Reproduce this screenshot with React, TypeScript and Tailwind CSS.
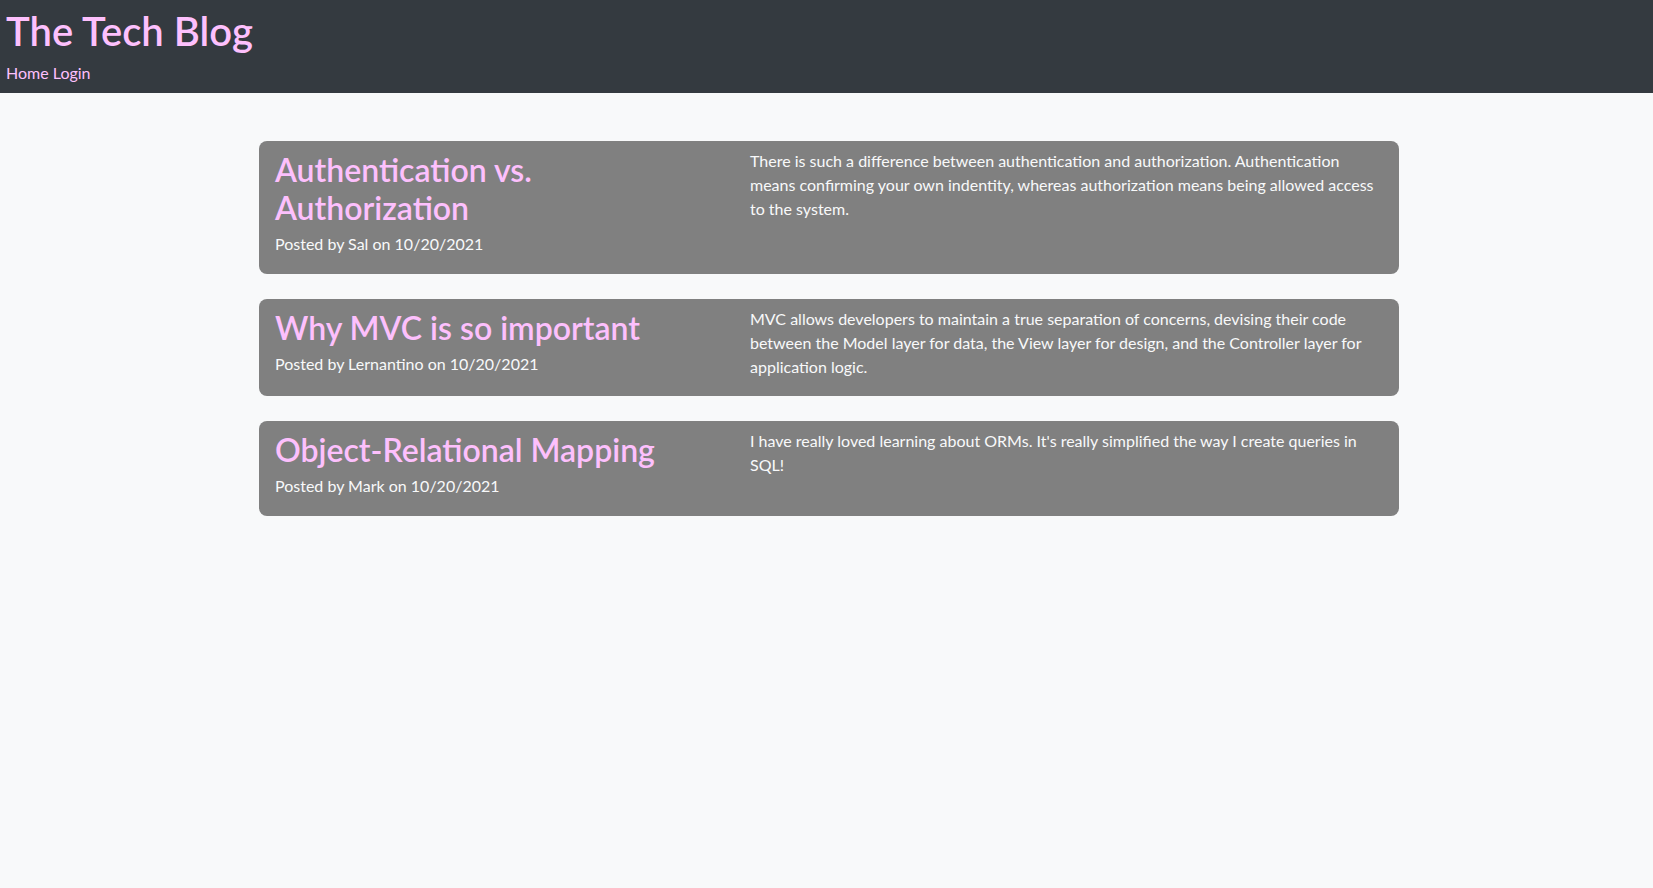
const posts = [
  {
    title: "Authentication vs. Authorization",
    author: "Sal",
    date: "10/20/2021",
    body: "There is such a difference between authentication and authorization. Authentication means confirming your own indentity, whereas authorization means being allowed access to the system.",
  },
  {
    title: "Why MVC is so important",
    author: "Lernantino",
    date: "10/20/2021",
    body: "MVC allows developers to maintain a true separation of concerns, devising their code between the Model layer for data, the View layer for design, and the Controller layer for application logic.",
  },
  {
    title: "Object-Relational Mapping",
    author: "Mark",
    date: "10/20/2021",
    body: "I have really loved learning about ORMs. It's really simplified the way I create queries in SQL!",
  },
];

export default function App() {
  return (
    <div className="min-h-[888px] bg-[#f8f9fa] font-['Lato',sans-serif] text-[16px] leading-6">
      <header className="bg-[#343a40] px-[6px] pt-[7px] pb-[8px]">
        <h1 className="text-[40px] leading-[48px] font-semibold text-[#fdc0fd] mb-[6px]">The Tech Blog</h1>
        <nav className="text-[#fdc0fd]">
          <a href="#">Home</a> <a href="#">Login</a>
        </nav>
      </header>

      <main className="mx-auto w-[1145px] pl-[5px] pt-12 flex flex-col gap-[25px]">
        {posts.map((p) => (
          <article key={p.title} className="grid grid-cols-12 rounded-lg bg-[#808080] text-[#f8f9fa]">
            <div className="col-span-5 px-4 pt-[10px]">
              <h2 className="text-[32px] leading-[38px] font-semibold text-[#fdc0fd] mb-[5px]">{p.title}</h2>
              <p className="mb-[18px]">
                Posted by {p.author} on {p.date}
              </p>
            </div>
            <div className="col-span-7 px-4 pt-2">
              <p className="mb-[17px]">{p.body}</p>
            </div>
          </article>
        ))}
      </main>
    </div>
  );
}
